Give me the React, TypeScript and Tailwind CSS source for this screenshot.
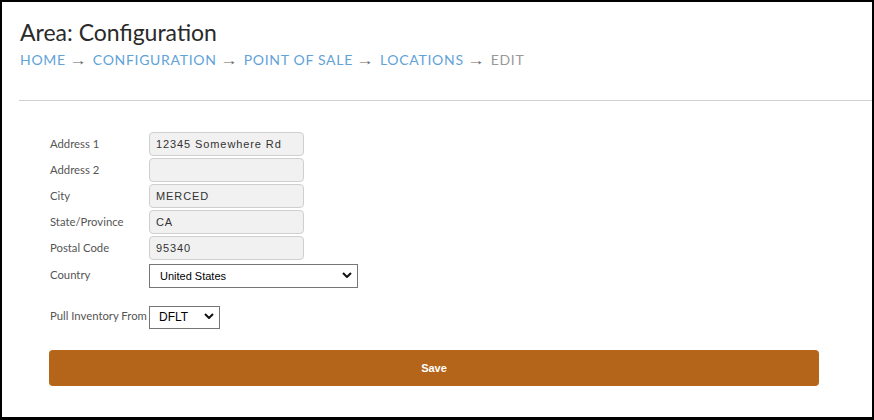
const fields = [
  { label: "Address 1", value: "12345 Somewhere Rd" },
  { label: "Address 2", value: "" },
  { label: "City", value: "MERCED" },
  { label: "State/Province", value: "CA" },
  { label: "Postal Code", value: "95340" },
];

const crumbs = ["HOME", "CONFIGURATION", "POINT OF SALE", "LOCATIONS"];

function Chevron() {
  return (
    <svg
      viewBox="0 0 10 6"
      className="pointer-events-none absolute right-[6px] top-1/2 h-[6px] w-[10px] -translate-y-1/2"
    >
      <path d="M1 1 L5 5 L9 1" fill="none" stroke="#111" strokeWidth="2" />
    </svg>
  );
}

export default function App() {
  return (
    <div className="h-[420px] w-[874px] overflow-hidden border-x-2 border-t-2 border-b-[3px] border-black bg-white font-['Lato',sans-serif]">
      <div className="pl-[18px] pt-[15px]">
        <h1 className="text-[23px] leading-[30px] text-[#2a2a2a]">Area: Configuration</h1>
        <nav className="mt-[2px] flex h-[20px] items-center text-[14px] tracking-[0.7px] text-[#5fa3d8]">
          {crumbs.map((c) => (
            <span key={c} className="flex items-center">
              <span>{c}</span>
              <span className="ml-[5px] mr-[8px] inline-block translate-y-[1px] scale-x-125 font-['Liberation_Sans',sans-serif] text-[14px] tracking-normal text-[#666]">→</span>
            </span>
          ))}
          <span className="text-[#999]">EDIT</span>
        </nav>
      </div>

      <div className="ml-[17px] mt-[31px] border-t border-[#d0d0d0]" />

      <div className="pl-[47px] pr-[53px] pt-[31px]">
        <div className="flex flex-col gap-[2px]">
          {fields.map((f) => (
            <div key={f.label} className="flex items-center">
              <label className="w-[100px] pl-[1px] text-[11.3px] text-[#555]">{f.label}</label>
              <input
                readOnly
                value={f.value}
                className="h-[24px] w-[155px] rounded-[4px] border border-[#cfcfcf] bg-[#f1f1f1] px-[6px] font-['Liberation_Sans',Arial,sans-serif] text-[11px] tracking-[0.9px] text-[#333] outline-none"
              />
            </div>
          ))}
          <div className="flex items-center">
            <label className="w-[100px] pl-[1px] text-[11.3px] text-[#555]">Country</label>
            <div className="relative">
              <select
                defaultValue="US"
                className="h-[24px] w-[209px] appearance-none rounded-none border border-[#767676] bg-white px-[10px] font-['Liberation_Sans',Arial,sans-serif] text-[11px] text-black outline-none"
              >
                <option value="US">United States</option>
              </select>
              <Chevron />
            </div>
          </div>
        </div>

        <div className="mt-[15px] flex items-center">
          <label className="w-[100px] whitespace-nowrap pl-[1px] text-[11.3px] text-[#555]">Pull Inventory From</label>
          <div className="relative">
            <select
              defaultValue="DFLT"
              className="h-[23px] w-[71px] appearance-none rounded-none border border-[#767676] bg-white px-[9px] font-['Liberation_Sans',Arial,sans-serif] text-[12px] text-black outline-none"
            >
              <option value="DFLT">DFLT</option>
            </select>
            <Chevron />
          </div>
        </div>

        <button className="mt-[21px] h-[36px] w-full rounded-[4px] bg-[#b5651a] font-['Liberation_Sans',Arial,sans-serif] text-[11px] font-bold text-white">
          Save
        </button>
      </div>
    </div>
  );
}
